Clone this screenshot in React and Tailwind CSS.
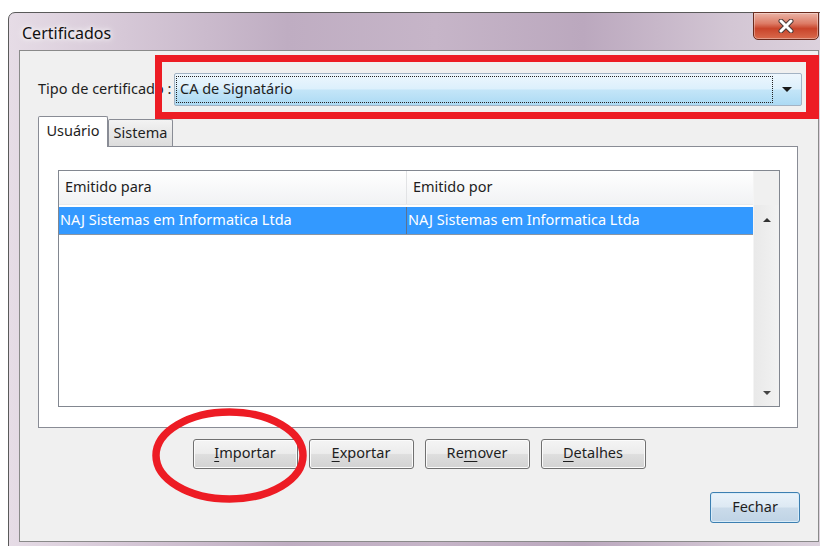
import React from "react";

// Small filled triangle used for combo and scrollbar arrows
function Tri({ dir = "down", w = 9, h = 5, color = "#1a1a1a" }) {
  const d = dir === "down" ? `M0 0 L${w} 0 L${w / 2} ${h}Z` : `M0 ${h} L${w} ${h} L${w / 2} 0Z`;
  return (
    <svg width={w} height={h} viewBox={`0 0 ${w} ${h}`}>
      <path d={d} fill={color} />
    </svg>
  );
}

function Btn({ children, className = "" }) {
  return (
    <div
      className={
        "flex items-center justify-center h-[30px] rounded-[3px] border border-[#707070] bg-[linear-gradient(#f4f4f4_0%,#ececec_48%,#dedede_52%,#d2d2d2_100%)] shadow-[inset_0_0_0_1px_#fbfbfb] text-[14.5px] text-[#1e1e1e] pb-[2px] " +
        className
      }
    >
      {children}
    </div>
  );
}

function U({ children }) {
  return <span className="underline underline-offset-[3px] decoration-1">{children}</span>;
}

export default function App() {
  return (
    <div className="relative w-[820px] h-[546px] overflow-hidden bg-white pl-[8px] pt-[12px] font-['Noto_Sans','Open_Sans',sans-serif]">
      {/* window frame */}
      <div className="w-[822px] h-[560px] flex flex-col rounded-t-[7px] border border-[#5a5a5a] px-[10px] bg-[linear-gradient(90deg,#e6dce6_0%,#d6c8d7_14%,#bfadc2_34%,#c6b5c8_52%,#bba8be_70%,#d3c6d4_88%,#ddd3de_100%)]">
        {/* title bar */}
        <div className="relative h-[37px] flex items-center">
          <span className="pl-[3px] pt-[3px] text-[16px] text-[#111] [text-shadow:0_0_8px_#ffffff,0_0_4px_#ffffff]">
            Certificados
          </span>
          <div className="absolute right-0 -top-px w-[66px] h-[28px] rounded-b-[5px] border border-[#6a2a1c] bg-[linear-gradient(#eab3a6_0%,#dd7c66_40%,#c9442a_60%,#d96a4d_100%)] shadow-[inset_0_0_0_1px_rgba(255,255,255,0.35)] flex items-center justify-center">
            <svg width="16" height="14" viewBox="0 0 16 14">
              <path d="M3 2 L13 12 M13 2 L3 12" stroke="#4a3a38" strokeWidth="5" strokeLinecap="round" />
              <path d="M3 2 L13 12 M13 2 L3 12" stroke="#ffffff" strokeWidth="3" strokeLinecap="round" />
            </svg>
          </div>
        </div>

        {/* client area */}
        <div className="w-[800px] h-[492px] border border-[#8a8a8a] bg-[#f0f0f0] flex flex-col text-[14.5px] text-[#1e1e1e]">
          {/* certificate type */}
          <div className="flex items-center mt-[22px] ml-[18px]">
            <span className="w-[136px] whitespace-nowrap pb-[2px]">Tipo de certificado :</span>
            <div className="w-[628px] h-[33px] border border-[#a3b3c4] rounded-[2px] bg-[linear-gradient(#edf6fd_0%,#dcf0fc_48%,#c3e5f8_52%,#acdaf4_100%)] flex items-center">
              <div className="ml-[1px] w-[597px] h-[27px] border border-dotted border-[#222] flex items-center pl-[3px] pb-[2px]">
                CA de Signatário
              </div>
              <div className="flex-1 flex justify-center">
                <Tri dir="down" w={10} h={5} />
              </div>
            </div>
          </div>

          {/* tabs */}
          <div className="flex items-end ml-[18px] mt-[10px] h-[30px]">
            <div className="relative z-10 w-[70px] h-[31px] -mb-px border border-b-0 border-[#898c95] rounded-t-[2px] bg-white flex items-start justify-center pt-[3px]">
              Usuário
            </div>
            <div className="w-[65px] h-[27px] border border-b-0 border-[#898c95] rounded-t-[2px] bg-[linear-gradient(#f3f3f3,#dcdcdc)] flex items-center justify-center">
              Sistema
            </div>
          </div>

          {/* tab panel */}
          <div className="ml-[18px] w-[760px] h-[282px] border border-[#898c95] bg-white pl-[19px] pt-[23px]">
            <div className="w-[722px] h-[237px] border border-[#828790] flex">
              <div className="w-[694px] flex flex-col">
                <div className="h-[34px] flex bg-[linear-gradient(#ffffff,#f1f2f4)] border-b border-[#eaeaea]">
                  <div className="w-[348px] border-r border-[#e2e3e5] flex items-center pl-[6px] pb-[2px]">Emitido para</div>
                  <div className="flex-1 flex items-center pl-[6px] pb-[2px]">Emitido por</div>
                </div>
                <div className="h-[2px]" />
                <div className="h-[28px] flex bg-[#3399ff] text-white border-b border-[#8a95a3]">
                  <div className="w-[348px] border-r border-[#5c7390] flex items-center pl-[1px] pb-[2px] whitespace-nowrap">
                    NAJ Sistemas em Informatica Ltda
                  </div>
                  <div className="flex-1 flex items-center pl-[1px] pb-[2px] whitespace-nowrap">
                    NAJ Sistemas em Informatica Ltda
                  </div>
                </div>
              </div>
              {/* vertical scrollbar */}
              <div className="flex-1 flex flex-col border-l border-[#f4f4f4]">
                <div className="h-[34px] bg-[#f0f0f0]" />
                <div className="flex-1 flex flex-col justify-between bg-[linear-gradient(90deg,#e9e9e9,#f2f2f2)]">
                  <div className="h-[29px] flex items-center justify-center">
                    <Tri dir="up" w={8} h={4} color="#333" />
                  </div>
                  <div className="h-[27px] flex items-center justify-center">
                    <Tri dir="down" w={8} h={4} color="#444" />
                  </div>
                </div>
              </div>
            </div>
          </div>

          {/* action buttons */}
          <div className="mt-[11px] flex justify-center gap-[11px]">
            <Btn className="w-[105px]">
              <U>I</U>mportar
            </Btn>
            <Btn className="w-[105px]">
              <U>E</U>xportar
            </Btn>
            <Btn className="w-[105px]">
              Re<U>m</U>over
            </Btn>
            <Btn className="w-[105px]">
              <U>D</U>etalhes
            </Btn>
          </div>

          {/* close */}
          <div className="mt-[23px] flex justify-end pr-[18px]">
            <div className="w-[90px] h-[31px] rounded-[3px] border border-[#3c7fb1] bg-[linear-gradient(#eaf3fa_0%,#dde9f3_48%,#cadbea_52%,#bfd3e5_100%)] shadow-[inset_0_0_0_1px_#d8ecf9] flex items-center justify-center pb-[2px]">
              Fechar
            </div>
          </div>
        </div>
      </div>

      {/* annotation: highlight around the type selector */}
      <div className="absolute left-[155px] top-[55px] w-[664px] h-[64px] border-[7px] border-r-[13px] border-[#ed1c24] pointer-events-none" />
      {/* annotation: circle around the import button */}
      <svg className="absolute left-[140px] top-[400px] pointer-events-none" width="180" height="115" viewBox="0 0 180 115">
        <ellipse cx="89.5" cy="55.5" rx="73.5" ry="43.5" fill="none" stroke="#ed1c24" strokeWidth="7.5" />
      </svg>
    </div>
  );
}
